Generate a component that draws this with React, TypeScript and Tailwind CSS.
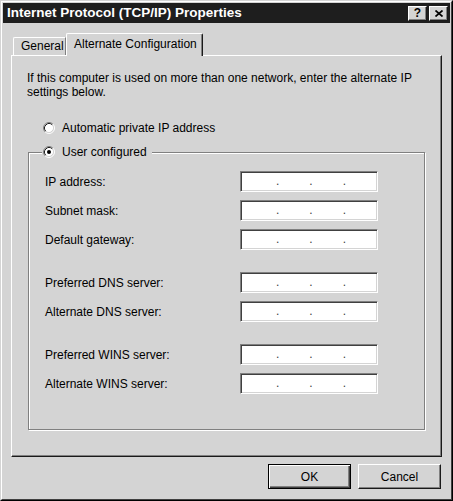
import React from "react";

function Radio({ checked }: { checked?: boolean }) {
  return (
    <svg width="12" height="12" viewBox="0 0 12 12" className="shrink-0">
      <circle cx="6" cy="6" r="4.5" fill="#ffffff" />
      <path d="M2.11 9.89 A5.5 5.5 0 0 1 9.89 2.11" fill="none" stroke="#808080" strokeWidth="1" />
      <path d="M9.89 2.11 A5.5 5.5 0 0 1 2.11 9.89" fill="none" stroke="#ffffff" strokeWidth="1" />
      <path d="M2.82 9.18 A4.5 4.5 0 0 1 9.18 2.82" fill="none" stroke="#202020" strokeWidth="1" />
      <path d="M9.18 2.82 A4.5 4.5 0 0 1 2.82 9.18" fill="none" stroke="#d4d4d4" strokeWidth="1" />
      {checked && <circle cx="6" cy="6" r="2" fill="#000000" />}
    </svg>
  );
}

function IpField() {
  return (
    <div className="w-[138px] h-[21px] shrink-0 bg-white border border-t-[#808080] border-l-[#808080] border-b-white border-r-white shadow-[inset_1px_1px_0_#404040,inset_-1px_-1px_0_#d4d4d4] flex items-start pt-[2px] text-[12px] leading-[14px] text-[#404040]">
      <span className="w-[35px] shrink-0" />
      <span>.</span>
      <span className="w-[30px] shrink-0" />
      <span>.</span>
      <span className="w-[30px] shrink-0" />
      <span>.</span>
    </div>
  );
}

function Row({ label, className }: { label: string; className?: string }) {
  return (
    <div className={"flex items-center h-[21px] " + (className ?? "")}>
      <span className="w-[195px] shrink-0 text-[12px] leading-[14px] whitespace-nowrap">{label}</span>
      <IpField />
    </div>
  );
}

function TitleButton({ children }: { children: React.ReactNode }) {
  return (
    <div className="w-[19px] h-[15px] bg-[#d4d4d4] border border-t-white border-l-white border-r-[#1a1a1a] border-b-[#1a1a1a] shadow-[inset_-1px_-1px_0_#808080] flex items-center justify-center">
      {children}
    </div>
  );
}

export default function App() {
  return (
    <div className="w-[453px] h-[501px] bg-[#d4d4d4] border border-t-[#d4d4d4] border-l-[#d4d4d4] border-r-black border-b-black font-['Liberation_Sans',Arial,sans-serif] text-black">
      <div className="h-full border border-t-white border-l-white border-r-[#404040] border-b-[#404040] p-[1px] flex flex-col">
        {/* Title bar */}
        <div className="h-[20px] bg-[#1e1e1e] flex items-center pl-[4px] pr-[2px]">
          <span className="flex-1 text-white font-bold text-[13.5px] leading-[16px] whitespace-nowrap">
            Internet Protocol (TCP/IP) Properties
          </span>
          <div className="flex gap-[2px]">
            <TitleButton>
              <span className="font-bold text-[12px] leading-[12px] text-black">?</span>
            </TitleButton>
            <TitleButton>
              <svg width="8" height="7" viewBox="0 0 8 7">
                <path d="M0.5 0.5 L7.5 6.5 M7.5 0.5 L0.5 6.5" stroke="#000" strokeWidth="1.7" fill="none" />
              </svg>
            </TitleButton>
          </div>
        </div>

        {/* Tabs */}
        <div className="h-[32px] flex items-end pl-[10px]">
          <div className="w-[53px] h-[18px] border-t border-l border-r border-t-white border-l-white border-r-[#808080] rounded-tl-[2px] pl-[7px] pt-[1px] text-[12px] leading-[14px] whitespace-nowrap">
            General
          </div>
          <div className="relative z-10 -mb-[1px] w-[137px] h-[23px] bg-[#d4d4d4] border-t border-l border-r border-t-white border-l-white border-r-[#1a1a1a] rounded-t-[2px] shadow-[inset_-1px_0_0_#808080] pl-[7px] pt-[3px] text-[12px] leading-[14px] whitespace-nowrap">
            Alternate Configuration
          </div>
        </div>

        {/* Panel */}
        <div className="ml-[8px] w-[431px] h-[402px] border border-t-white border-l-white border-r-[#1a1a1a] border-b-[#1a1a1a] shadow-[inset_-1px_-1px_0_#808080] flex flex-col">
          <p className="ml-[15px] mt-[15px] text-[12px] leading-[14px] whitespace-nowrap">
            If this computer is used on more than one network, enter the alternate IP
            <br />
            settings below.
          </p>

          <div className="ml-[31px] mt-[22px] h-[14px] flex items-center gap-[7px] text-[12px] leading-[14px]">
            <Radio />
            <span>Automatic private IP address</span>
          </div>

          <div className="relative ml-[16px] mt-[17px] w-[397px] h-[278px] border border-[#808080] shadow-[1px_1px_0_#ffffff,inset_1px_1px_0_#ffffff] pt-[18px] pl-[16px] flex flex-col">
            <div className="absolute left-[13px] -top-[8px] h-[14px] bg-[#d4d4d4] pl-[1px] pr-[5px] flex items-center gap-[7px] text-[12px] leading-[14px] whitespace-nowrap">
              <Radio checked />
              <span>User configured</span>
            </div>

            <Row label="IP address:" />
            <Row label="Subnet mask:" className="mt-[8px]" />
            <Row label="Default gateway:" className="mt-[8px]" />
            <Row label="Preferred DNS server:" className="mt-[22px]" />
            <Row label="Alternate DNS server:" className="mt-[8px]" />
            <Row label="Preferred WINS server:" className="mt-[22px]" />
            <Row label="Alternate WINS server:" className="mt-[8px]" />
          </div>
        </div>

        {/* Buttons */}
        <div className="mt-[7px] flex justify-end gap-[7px] pr-[9px]">
          <button
            type="button"
            className="w-[83px] h-[25px] bg-[#d4d4d4] border border-black shadow-[inset_1px_1px_0_#ffffff,inset_-1px_-1px_0_#404040,inset_-2px_-2px_0_#808080] flex items-center justify-center text-[12px] leading-[14px]"
          >
            OK
          </button>
          <button
            type="button"
            className="w-[83px] h-[25px] bg-[#d4d4d4] border border-t-white border-l-white border-r-[#1a1a1a] border-b-[#1a1a1a] shadow-[inset_-1px_-1px_0_#808080] flex items-center justify-center text-[12px] leading-[14px]"
          >
            Cancel
          </button>
        </div>
      </div>
    </div>
  );
}
